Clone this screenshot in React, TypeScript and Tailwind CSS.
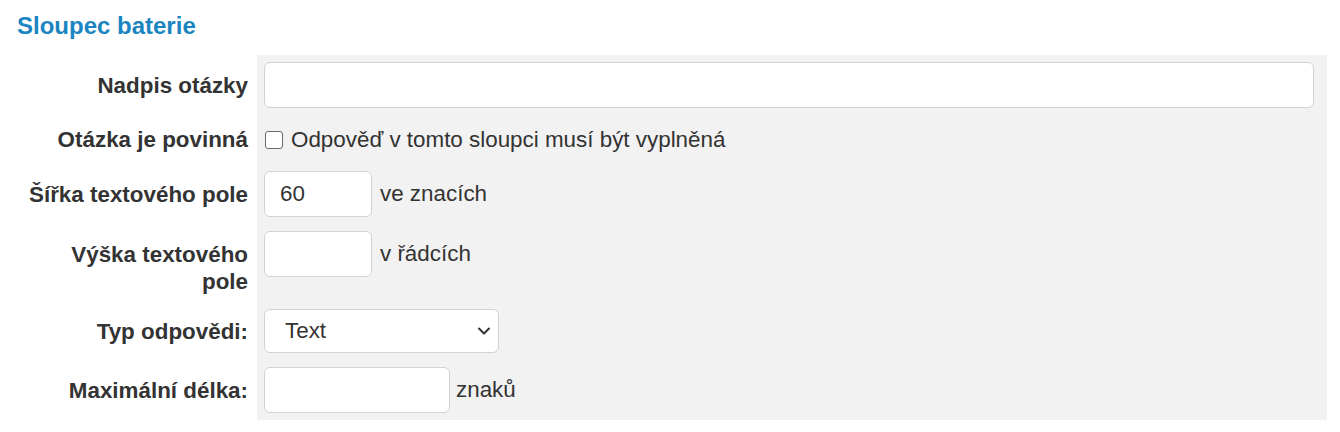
import React from "react";

const Label = ({ children, top = false }: { children: React.ReactNode; top?: boolean }) => (
  <div
    className={
      top
        ? "w-[257px] shrink-0 pr-[9px] pt-[17px] pb-[7px] text-right font-bold text-[22.4px] leading-[27px] text-[#333]"
        : "w-[257px] shrink-0 pr-[9px] flex items-center justify-end text-right font-bold text-[22.4px] leading-[27px] text-[#333]"
    }
  >
    {children}
  </div>
);

export default function App() {
  return (
    <div className="w-[1340px] h-[432px] bg-white font-['Liberation_Sans',Arial,sans-serif] text-[#333]">
      <h2 className="pl-[17px] pt-[12px] mb-[15px] text-[24px] leading-[28px] font-bold text-[#1a85c0]">
        Sloupec baterie
      </h2>

      <div className="flex flex-col mr-[13px]">
        {/* Row 1 */}
        <div className="flex">
          <Label>Nadpis otázky</Label>
          <div className="flex-1 bg-[#f2f2f2] pl-[7px] pr-[13px] py-[7px]">
            <div className="h-[46px] w-full rounded-[6px] border border-[#cfd2d6] bg-white" />
          </div>
        </div>

        {/* Row 2 */}
        <div className="flex">
          <Label>Otázka je povinná</Label>
          <div className="flex-1 bg-[#f2f2f2] px-[7px] h-[49px] flex items-center">
            <div className="w-[18px] h-[18px] rounded-[3px] border border-[#6b6b6b] bg-white shrink-0 ml-[1px]" />
            <span className="ml-[8px] text-[22.4px] leading-[27px] text-[#333]">
              Odpověď v tomto sloupci musí být vyplněná
            </span>
          </div>
        </div>

        {/* Row 3 */}
        <div className="flex">
          <Label>Šířka textového pole</Label>
          <div className="flex-1 bg-[#f2f2f2] p-[7px] flex items-center">
            <div className="h-[46px] w-[108px] rounded-[6px] border border-[#cfd2d6] bg-white flex items-center pl-[15px] text-[22.4px] text-[#333]">
              60
            </div>
            <span className="ml-[8px] text-[22.4px] text-[#333]">ve znacích</span>
          </div>
        </div>

        {/* Row 4 */}
        <div className="flex">
          <Label top>
            Výška textového
            <br />
            pole
          </Label>
          <div className="flex-1 bg-[#f2f2f2] p-[7px]">
            <div className="flex items-center">
              <div className="h-[46px] w-[108px] rounded-[6px] border border-[#cfd2d6] bg-white" />
              <span className="ml-[8px] text-[22.4px] text-[#333]">v řádcích</span>
            </div>
          </div>
        </div>

        {/* Row 5 */}
        <div className="flex">
          <Label>Typ odpovědi:</Label>
          <div className="flex-1 bg-[#f2f2f2] p-[7px] flex items-center">
            <div className="h-[44px] w-[235px] rounded-[6px] border border-[#cfd2d6] bg-white flex items-center justify-between pl-[20px] pr-[7px] text-[22.4px] text-[#333]">
              <span>Text</span>
              <svg width="14" height="10" viewBox="0 0 14 10" fill="none">
                <path d="M2 2.5 L7 7.5 L12 2.5" stroke="#333" strokeWidth="2" strokeLinecap="round" strokeLinejoin="round" />
              </svg>
            </div>
          </div>
        </div>

        {/* Row 6 */}
        <div className="flex">
          <Label>Maximální délka:</Label>
          <div className="flex-1 bg-[#f2f2f2] p-[7px] flex items-center">
            <div className="h-[46px] w-[186px] rounded-[6px] border border-[#cfd2d6] bg-white" />
            <span className="ml-[6px] text-[22.4px] text-[#333]">znaků</span>
          </div>
        </div>
      </div>
    </div>
  );
}
